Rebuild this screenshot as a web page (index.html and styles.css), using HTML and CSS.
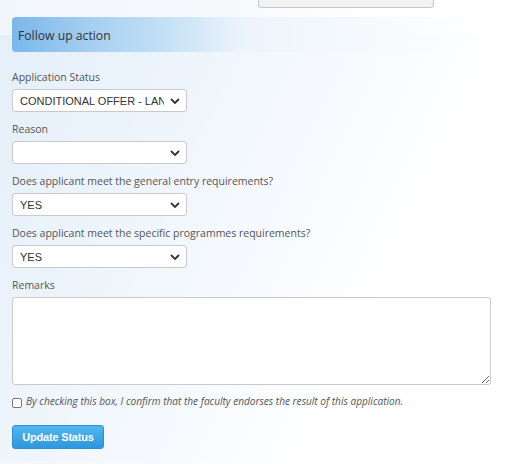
FILE: index.html
```html
<!DOCTYPE html>
<html>
<head>
<meta charset="utf-8">
<link rel="stylesheet" href="styles.css">
</head>
<body>
<div class="stub"></div>
<div class="panel">
  <div class="panel-head">Follow up action</div>
  <form class="form">
    <div class="field">
      <label class="label">Application Status</label>
      <div class="select"><span class="select-text">CONDITIONAL OFFER - LAN</span><svg class="chev" viewBox="0 0 10 6"><path d="M1 1 L5 5 L9 1" fill="none" stroke="#333" stroke-width="1.8"/></svg></div>
    </div>
    <div class="field">
      <label class="label">Reason</label>
      <div class="select"><span class="select-text"></span><svg class="chev" viewBox="0 0 10 6"><path d="M1 1 L5 5 L9 1" fill="none" stroke="#333" stroke-width="1.8"/></svg></div>
    </div>
    <div class="field">
      <label class="label">Does applicant meet the general entry requirements?</label>
      <div class="select"><span class="select-text">YES</span><svg class="chev" viewBox="0 0 10 6"><path d="M1 1 L5 5 L9 1" fill="none" stroke="#333" stroke-width="1.8"/></svg></div>
    </div>
    <div class="field">
      <label class="label">Does applicant meet the specific programmes requirements?</label>
      <div class="select"><span class="select-text">YES</span><svg class="chev" viewBox="0 0 10 6"><path d="M1 1 L5 5 L9 1" fill="none" stroke="#333" stroke-width="1.8"/></svg></div>
    </div>
    <div class="field">
      <label class="label">Remarks</label>
      <textarea class="textarea"></textarea>
    </div>
    <div class="check-row">
      <span class="checkbox"></span>
      <span class="check-text">By checking this box, I confirm that the faculty endorses the result of this application.</span>
    </div>
    <div class="actions">
      <button type="button" class="btn">Update Status</button>
    </div>
  </form>
</div>
</body>
</html>
```
FILE: styles.css
```css
html, body {
  margin: 0;
  padding: 0;
  background: #ffffff;
}
body {
  width: 512px;
  height: 464px;
  overflow: hidden;
  font-family: "Open Sans", "Noto Sans", sans-serif;
  color: #555;
  background: linear-gradient(100deg, #f1f6fb 0%, #f7fafd 40%, #ffffff 70%);
}
.stub {
  margin-left: 258px;
  width: 174px;
  height: 7px;
  background: #f2f2f2;
  border: 1px solid #c8c8c8;
  border-top: none;
  border-radius: 0 0 4px 4px;
}
.panel {
  margin-top: 27px;
  margin-right: 8px;
  height: 426px;
  border-radius: 0 0 6px 6px;
  background: linear-gradient(115deg, #e4eff9 0%, #eef5fb 30%, #f8fbfe 55%, #ffffff 75%);
  padding: 0 12px 0 12px;
  box-sizing: border-box;
}
.panel-head {
  position: relative;
  top: -18px;
  height: 35px;
  width: 478px;
  box-sizing: border-box;
  padding-left: 6px;
  padding-top: 2px;
  display: flex;
  align-items: center;
  font-size: 12.2px;
  color: #333;
  border-radius: 4px 0 0 4px;
  background: linear-gradient(90deg, #7ab8e9 0%, #a9d1f1 18%, #c4e0f6 32%, #ecf4fb 48%, #f6fafd 75%, rgba(255,255,255,0.6) 100%);
  margin-bottom: -18px;
}
.form {
  display: flex;
  flex-direction: column;
  padding-top: 18px;
}
.field {
  display: flex;
  flex-direction: column;
  gap: 5px;
  margin-bottom: 10px;
}
.label {
  font-size: 10.5px;
  line-height: 14px;
  color: #555;
}
.select {
  width: 175px;
  height: 23px;
  box-sizing: border-box;
  background: #fff;
  border: 1px solid #c9c9c9;
  border-radius: 3px;
  display: flex;
  align-items: center;
  padding: 0 4px 0 7px;
  gap: 4px;
}
.select-text {
  flex: 1;
  font-family: "Liberation Sans", Arial, sans-serif;
  font-size: 11px;
  color: #333;
  white-space: nowrap;
  overflow: hidden;
  clip-path: inset(0 2px 0 0);
}
.chev {
  width: 10px;
  height: 6px;
  margin-right: 2px;
}
.textarea {
  width: 479px;
  height: 88px;
  box-sizing: border-box;
  border: 1px solid #c9c9c9;
  border-radius: 3px;
  background: #fff;
  margin: 0;
  display: block;
}
.check-row {
  display: flex;
  align-items: center;
  gap: 4px;
  margin-top: -1px;
}
.checkbox {
  width: 8px;
  height: 8px;
  border: 1px solid #767676;
  border-radius: 2px;
  background: #fff;
  margin-top: 3px;
}
.check-text {
  font-size: 10.1px;
  font-style: italic;
  color: #555;
}
.actions {
  margin-top: 16px;
}
.btn {
  width: 92px;
  height: 24px;
  border: 1px solid #2b90d4;
  border-radius: 3px;
  background: linear-gradient(180deg, #52b6f0 0%, #2d98de 100%);
  color: #fff;
  font-family: "Liberation Sans", Arial, sans-serif;
  font-weight: bold;
  font-size: 11px;
  padding: 0;
  letter-spacing: -0.2px;
}
```
